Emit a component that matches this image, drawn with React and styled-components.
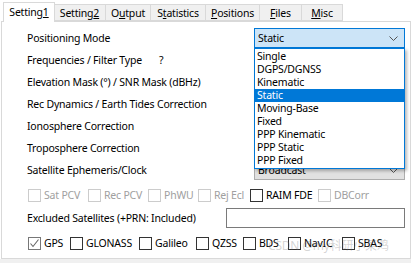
import React from 'react';
import styled, { createGlobalStyle } from 'styled-components';

const GlobalStyle = createGlobalStyle`
  html, body {
    margin: 0;
    padding: 0;
    background: #fff;
  }
  body {
    font-family: "Noto Sans", "Liberation Sans", sans-serif;
    font-size: 10.5px;
    letter-spacing: -0.2px;
    color: #000;
  }
`;

const Window = styled.div`
  position: relative;
  width: 411px;
  height: 263px;
  display: flex;
  flex-direction: column;
  background: #fff;
  overflow: hidden;
`;

const TabStrip = styled.div`
  display: flex;
  align-items: flex-end;
  height: 21px;
  padding-left: 3px;
`;

const Tab = styled.div`
  position: relative;
  box-sizing: border-box;
  width: ${p => p.w}px;
  height: ${p => (p.active ? 20 : 17)}px;
  margin-left: ${p => p.ml || 0}px;
  margin-bottom: ${p => (p.active ? -1 : 0)}px;
  border: 1px solid #d9d9d9;
  border-bottom: ${p => (p.active ? 'none' : '1px solid #d9d9d9')};
  background: ${p => (p.active ? '#fff' : '#f0f0f0')};
  z-index: ${p => (p.active ? 2 : 1)};
  display: flex;
  align-items: center;
  justify-content: center;
  padding-bottom: ${p => (p.active ? 2 : 0)}px;
  white-space: nowrap;

  u { text-decoration: underline; text-underline-offset: 1px; }
`;

const Panel = styled.div`
  position: relative;
  box-sizing: border-box;
  margin-left: 1px;
  width: 410px;
  height: 238px;
  border: 1px solid #d9d9d9;
  background: #fff;
  padding: 5px 5px 0 25px;
  display: flex;
  flex-direction: column;
`;

const Footer = styled.div`
  flex: 1;
  background: #f0f0f0;
`;

const Row = styled.div`
  display: flex;
  align-items: center;
  justify-content: space-between;
  height: 22px;
  margin-top: ${p => p.mt || 0}px;
  white-space: nowrap;
`;

const Label = styled.div`
  display: flex;
  align-items: center;
`;

const Hint = styled.span`
  margin-left: 17px;
`;

const ComboWrap = styled.div`
  position: relative;
  width: 151px;
  height: 20px;
`;

const Combo = styled.div`
  box-sizing: border-box;
  height: 20px;
  display: flex;
  align-items: center;
  justify-content: space-between;
  padding: 0 6px 0 3px;
  background: ${p => (p.focused ? '#cce4f7' : '#e1e1e1')};
  border: 1px solid ${p => (p.focused ? '#0078d7' : '#adadad')};
`;

const DropList = styled.ul`
  position: absolute;
  top: 100%;
  left: 0;
  z-index: 5;
  box-sizing: border-box;
  width: 151px;
  margin: 0;
  padding: 1px 0;
  list-style: none;
  background: #fff;
  border: 1px solid #0078d7;
  box-shadow: 2px 2px 3px rgba(0, 0, 0, 0.28);
`;

const DropItem = styled.li`
  height: 13px;
  line-height: 13px;
  padding-left: 2px;
  background: ${p => (p.selected ? '#0078d7' : 'transparent')};
  color: ${p => (p.selected ? '#fff' : '#000')};
`;

const TextField = styled.div`
  box-sizing: border-box;
  width: 179px;
  height: 20px;
  border: 1px solid #7a7a7a;
  background: #fff;
`;

const CheckRow = styled.div`
  display: flex;
  align-items: center;
  height: 22px;
  margin-top: ${p => p.mt || 0}px;
  padding-left: 1px;
  white-space: nowrap;
`;

const CheckItem = styled.label`
  display: flex;
  align-items: center;
  width: ${p => (p.w ? `${p.w}px` : 'auto')};
  color: ${p => (p.disabled ? '#a0a0a0' : '#000')};
`;

const Box = styled.span`
  box-sizing: border-box;
  width: 13px;
  height: 13px;
  margin-right: 3px;
  border: 1px solid ${p => (p.disabled ? '#cccccc' : p.checked ? '#777' : '#333')};
  background: #fff;
  display: flex;
  align-items: center;
  justify-content: center;
`;

const Watermark = styled.div`
  position: absolute;
  left: 268px;
  top: 236px;
  font-size: 12px;
  color: rgba(110, 110, 110, 0.3);
  font-family: "Noto Sans", "Noto Sans CJK SC", sans-serif;
  white-space: nowrap;
  pointer-events: none;
  z-index: 10;
`;

const Chevron = () => (
  <svg width="9" height="5" viewBox="0 0 9 5">
    <path d="M0.5 0.5 L4.5 4.5 L8.5 0.5" fill="none" stroke="#555" strokeWidth="1" />
  </svg>
);

const Check = () => (
  <svg width="11" height="11" viewBox="0 0 11 11">
    <path d="M1.5 5.5 L4 8.5 L9.5 1.5" fill="none" stroke="#666" strokeWidth="1.1" />
  </svg>
);

const Checkbox = ({ label, w, disabled, checked }) => (
  <CheckItem w={w} disabled={disabled}>
    <Box disabled={disabled} checked={checked}>{checked && <Check />}</Box>
    {label}
  </CheckItem>
);

const tabs = [
  { w: 52, ml: 0, active: true, text: <>Setting<u>1</u></> },
  { w: 53, ml: -2, text: <>Setting<u>2</u></> },
  { w: 46, ml: -1, text: <>O<u>u</u>tput</> },
  { w: 56, ml: -1, text: <>S<u>t</u>atistics</> },
  { w: 55, ml: -1, text: <><u>P</u>ositions</> },
  { w: 43, ml: -1, text: <><u>F</u>iles</> },
  { w: 42, ml: -1, text: <><u>M</u>isc</> },
];

const modes = [
  'Single', 'DGPS/DGNSS', 'Kinematic', 'Static', 'Moving-Base',
  'Fixed', 'PPP Kinematic', 'PPP Static', 'PPP Fixed',
];

const options = [
  { label: 'Sat PCV', w: 60, disabled: true },
  { label: 'Rec PCV', w: 60, disabled: true },
  { label: 'PhWU', w: 50, disabled: true },
  { label: 'Rej Ecl', w: 52, disabled: true },
  { label: 'RAIM FDE', w: 68 },
  { label: 'DBCorr', disabled: true },
];

const systems = [
  { label: 'GPS', w: 42, checked: true },
  { label: 'GLONASS', w: 69 },
  { label: 'Galileo', w: 57 },
  { label: 'QZSS', w: 47 },
  { label: 'BDS', w: 45 },
  { label: 'NavIC', w: 54 },
  { label: 'SBAS' },
];

export default function App() {
  return (
    <Window>
      <GlobalStyle />
      <TabStrip>
        {tabs.map((t, i) => (
          <Tab key={i} w={t.w} ml={t.ml} active={t.active}>{t.text}</Tab>
        ))}
      </TabStrip>
      <Panel>
        <Row>
          <Label>Positioning Mode</Label>
          <ComboWrap>
            <Combo focused>
              <span>Static</span>
              <Chevron />
            </Combo>
            <DropList>
              {modes.map(m => (
                <DropItem key={m} selected={m === 'Static'}>{m}</DropItem>
              ))}
            </DropList>
          </ComboWrap>
        </Row>
        <Row>
          <Label>Frequencies / Filter Type<Hint>?</Hint></Label>
        </Row>
        <Row>
          <Label>Elevation Mask (°) / SNR Mask (dBHz)</Label>
        </Row>
        <Row>
          <Label>Rec Dynamics / Earth Tides Correction</Label>
        </Row>
        <Row>
          <Label>Ionosphere Correction</Label>
        </Row>
        <Row>
          <Label>Troposphere Correction</Label>
        </Row>
        <Row>
          <Label>Satellite Ephemeris/Clock</Label>
          <ComboWrap>
            <Combo>
              <span>Broadcast</span>
              <Chevron />
            </Combo>
          </ComboWrap>
        </Row>
        <CheckRow mt={3}>
          {options.map(o => <Checkbox key={o.label} {...o} />)}
        </CheckRow>
        <Row mt={1}>
          <Label>Excluded Satellites (+PRN: Included)</Label>
          <TextField />
        </Row>
        <CheckRow mt={3}>
          {systems.map(s => <Checkbox key={s.label} {...s} />)}
        </CheckRow>
      </Panel>
      <Footer />
      <Watermark>CSDN @my科研小菜鸡</Watermark>
    </Window>
  );
}
